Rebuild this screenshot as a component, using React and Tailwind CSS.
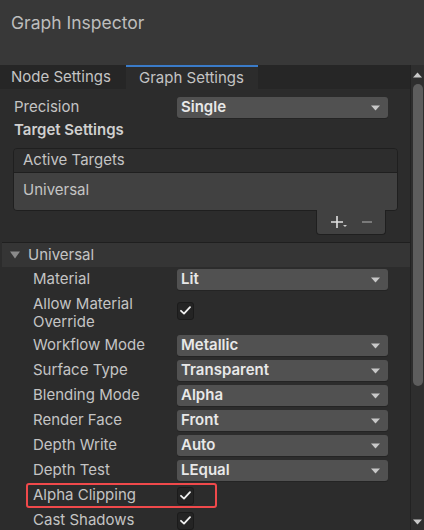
import React from "react";

const font = { fontFamily: "Inter, 'Noto Sans', sans-serif" };

function Arrow() {
  return (
    <svg width="9" height="6" viewBox="0 0 9 6" className="shrink-0">
      <path d="M0 0.5 H9 L4.5 5.5 Z" fill="#c8c8c8" />
    </svg>
  );
}

function Dropdown({ value }) {
  return (
    <div className="ml-auto mr-[22px] flex h-[21px] w-[211px] items-center justify-between rounded-[3px] bg-[#515151] pl-[4px] pr-[8px] shadow-[0_1px_0_#242424]">
      <span className="text-[15px] font-semibold text-[#e8e8e8]">{value}</span>
      <Arrow />
    </div>
  );
}

function Check() {
  return (
    <div className="flex h-[18px] w-[17px] items-center justify-center rounded-[3px] border border-[#1b1b1b] bg-[#242424]">
      <svg width="11" height="9" viewBox="0 0 11 9">
        <path d="M1 4.8 L4 7.6 L10 1.2" fill="none" stroke="#f0f0f0" strokeWidth="1.8" strokeLinecap="round" strokeLinejoin="round" />
      </svg>
    </div>
  );
}

function Row({ label, children }) {
  return (
    <div className="flex h-[25px] items-center pl-[33px]">
      <span className="w-[144px] text-[15px] text-[#c4c4c4]">{label}</span>
      {children}
    </div>
  );
}

export default function App() {
  return (
    <div className="flex h-[530px] w-[424px] flex-col overflow-hidden bg-[#2c2c2c]" style={font}>
      <div className="h-[65px] shrink-0 bg-[#383838] pl-[11px] pt-[10px] text-[17.5px] text-[#bdbdbd]">
        Graph Inspector
      </div>
      <div className="flex min-h-0 flex-1">
        <div className="flex w-[410px] flex-col">
          <div className="flex h-[24px] shrink-0 bg-[#262626]">
            <div className="flex w-[126px] items-center pl-[11px] text-[15px] text-[#c4c4c4]">Node Settings</div>
            <div className="flex w-[132px] items-center border-t-2 border-[#3a7bc8] bg-[#2c2c2c] pl-[13px] text-[15px] text-[#c4c4c4]">
              Graph Settings
            </div>
          </div>
          <div className="pt-[6px]">
            <div className="flex h-[25px] items-center pl-[14px]">
              <span className="w-[163px] text-[15px] text-[#c4c4c4]">Precision</span>
              <Dropdown value="Single" />
            </div>
            <div className="flex h-[20px] items-center pl-[14px] text-[15px] font-semibold text-[#d0d0d0]">
              Target Settings
            </div>
            <div className="ml-[13px] mr-[12px] mt-[8px]">
              <div className="overflow-hidden rounded-[4px] border border-[#1f1f1f]">
                <div className="flex h-[24px] items-center border-b border-[#1f1f1f] bg-[#2d2d2d] pl-[9px] text-[15px] text-[#c4c4c4]">
                  Active Targets
                </div>
                <div className="flex h-[37px] items-center bg-[#414141] pb-[3px] pl-[9px] text-[15px] text-[#c4c4c4]">
                  Universal
                </div>
              </div>
              <div className="flex justify-end pr-[12px]">
                <div className="-mt-px flex h-[25px] w-[70px] items-center rounded-b-[4px] border border-t-0 border-[#1f1f1f] bg-[#414141] pl-[13px]">
                  <svg width="22" height="14" viewBox="0 0 22 14">
                    <path d="M7 1 V13 M1 7 H13" stroke="#e0e0e0" strokeWidth="1.6" />
                    <path d="M13 10 H17 L15 12 Z" fill="#c8c8c8" />
                  </svg>
                  <div className="ml-[10px] h-[2px] w-[10px] bg-[#7a7a7a]" />
                </div>
              </div>
            </div>
            <div className="mt-[7px] ml-[2px] flex h-[25px] items-center border-t border-[#1f1f1f] bg-[#353535] pl-[8px]">
              <svg width="10" height="8" viewBox="0 0 10 8" className="mr-[8px]">
                <path d="M0 0.5 H10 L5 7.5 Z" fill="#8a8a8a" />
              </svg>
              <span className="text-[15px] text-[#c4c4c4]">Universal</span>
            </div>
            <Row label="Material"><Dropdown value="Lit" /></Row>
            <div className="flex h-[41px] items-center pl-[33px]">
              <span className="w-[144px] text-[15px] leading-[18px] text-[#c4c4c4]">
                Allow Material
                <br />
                Override
              </span>
              <div className="-mt-[4px]"><Check /></div>
            </div>
            <Row label="Workflow Mode"><Dropdown value="Metallic" /></Row>
            <Row label="Surface Type"><Dropdown value="Transparent" /></Row>
            <Row label="Blending Mode"><Dropdown value="Alpha" /></Row>
            <Row label="Render Face"><Dropdown value="Front" /></Row>
            <Row label="Depth Write"><Dropdown value="Auto" /></Row>
            <Row label="Depth Test"><Dropdown value="LEqual" /></Row>
            <div className="relative">
              <Row label="Alpha Clipping"><Check /></Row>
              <div className="pointer-events-none absolute left-[26px] top-0 h-[25px] w-[191px] rounded-[3px] border-2 border-[#f0494b]" />
            </div>
            <Row label="Cast Shadows"><Check /></Row>
          </div>
        </div>
        <div className="relative flex w-[14px] flex-col items-center border-l border-[#222222] bg-[#2e2e2e]">
          <svg width="9" height="6" viewBox="0 0 9 6" className="mt-[7px]">
            <path d="M4.5 0.5 L9 5.5 H0 Z" fill="#c8c8c8" />
          </svg>
          <div className="mt-[6px] h-[302px] w-[10px] rounded-full bg-[#5d5d5d]" />
          <div className="flex-1" />
          <svg width="9" height="6" viewBox="0 0 9 6" className="mb-[5px]">
            <path d="M0 0.5 H9 L4.5 5.5 Z" fill="#c8c8c8" />
          </svg>
        </div>
      </div>
    </div>
  );
}
